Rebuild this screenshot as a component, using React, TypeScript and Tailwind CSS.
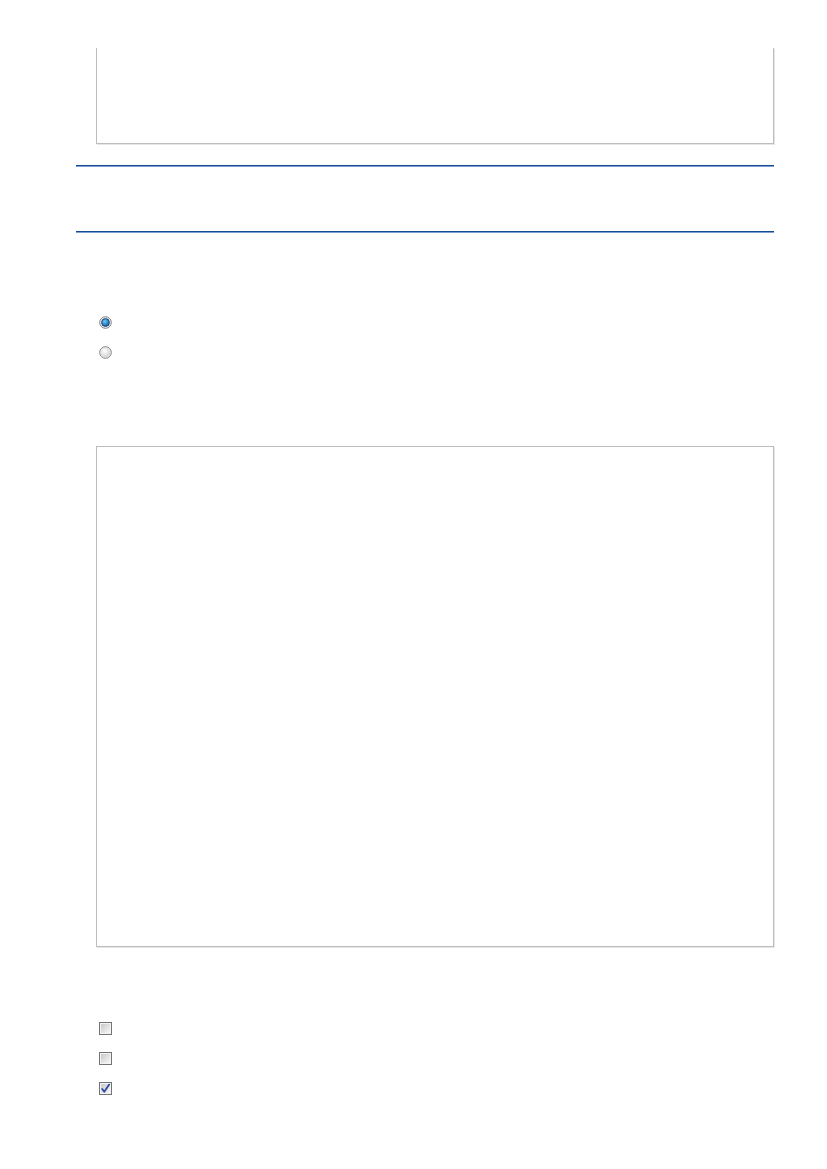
import React from 'react';

const Radio: React.FC<{ checked?: boolean }> = ({ checked }) => (
  <svg width="13" height="13" viewBox="0 0 13 13" className="shrink-0">
    <defs>
      <radialGradient id={checked ? 'rOn' : 'rOff'} cx="40%" cy="35%" r="70%">
        <stop offset="0%" stopColor={checked ? '#6cc8ff' : '#ffffff'} />
        <stop offset="100%" stopColor={checked ? '#0b5c9e' : '#cfcfcf'} />
      </radialGradient>
    </defs>
    <circle cx="6.5" cy="6.5" r="5.8" fill="#f2f2f2" stroke="#7f7f7f" strokeWidth="1" />
    {checked ? (
      <circle cx="6.5" cy="6.5" r="3.9" fill="url(#rOn)" stroke="#173f6a" strokeWidth="0.9" />
    ) : (
      <circle cx="6.5" cy="6.5" r="4.7" fill="url(#rOff)" />
    )}
  </svg>
);

const Checkbox: React.FC<{ checked?: boolean }> = ({ checked }) => (
  <svg width="13" height="13" viewBox="0 0 13 13" className="shrink-0">
    <defs>
      <linearGradient id="cb" x1="0" y1="0" x2="1" y2="1">
        <stop offset="0%" stopColor="#c9c9c9" />
        <stop offset="100%" stopColor="#f7f7f7" />
      </linearGradient>
    </defs>
    <rect x="0.5" y="0.5" width="12" height="12" fill="#f4f4f4" stroke="#737373" />
    <rect x="2" y="2" width="9" height="9" fill="url(#cb)" />
    {checked && (
      <path d="M3.2 7 L5.3 9.8 L10.2 2.6" fill="none" stroke="#2c4aa0" strokeWidth="1.8" strokeLinecap="round" strokeLinejoin="round" />
    )}
  </svg>
);

const Rule = () => (
  <div className="w-full">
    <div className="h-px bg-[#134a92]" />
    <div className="h-px bg-[#7a9fcf]" />
  </div>
);

export default function App() {
  return (
    <div className="w-[827px] min-h-[1169px] bg-white font-['Liberation_Sans',Arial,sans-serif] text-sm">
      <div className="pl-[76px] pr-[53px]">
        {/* top panel, cut off at the top */}
        <div className="ml-[20px] mt-[48px] h-[96px] border-x border-b border-[#bdbdbd] shadow-[1px_1px_0_#e6e6e6]" />

        <div className="mt-[21px]">
          <Rule />
        </div>
        <div className="mt-[64px]">
          <Rule />
        </div>

        <div className="ml-[23px] mt-[83px] flex flex-col gap-[17px]">
          <Radio checked />
          <Radio />
        </div>

        <div className="ml-[20px] mt-[87px] h-[501px] border border-[#bdbdbd] shadow-[1px_1px_0_#e6e6e6]" />

        <div className="ml-[23px] mt-[75px] flex flex-col gap-[17px]">
          <Checkbox />
          <Checkbox />
          <Checkbox checked />
        </div>
      </div>
    </div>
  );
}
